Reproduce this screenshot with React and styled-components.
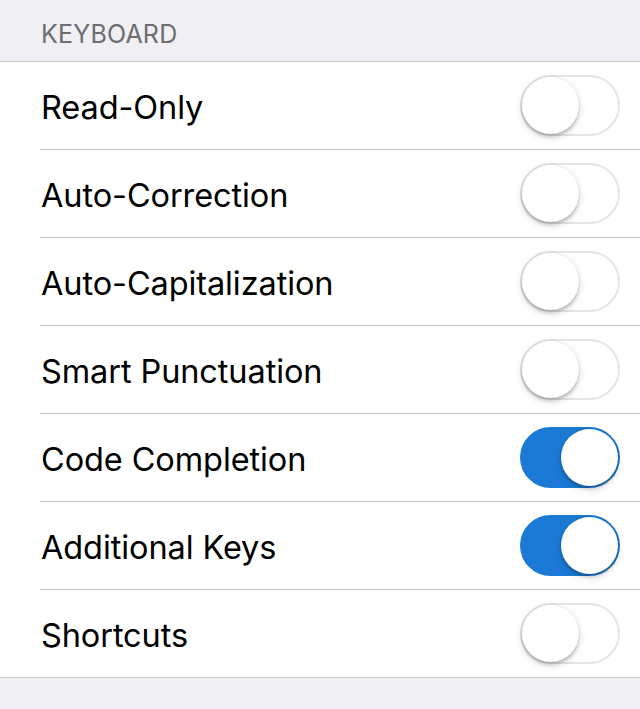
import React, { useState } from 'react'
import styled, { createGlobalStyle } from 'styled-components'

const GlobalStyle = createGlobalStyle`
  html, body {
    margin: 0;
    padding: 0;
    background: #efeff4;
    font-family: Inter, "Noto Sans", sans-serif;
    -webkit-font-smoothing: antialiased;
  }
`

const initial = [
  { label: 'Read-Only', on: false },
  { label: 'Auto-Correction', on: false },
  { label: 'Auto-Capitalization', on: false },
  { label: 'Smart Punctuation', on: false },
  { label: 'Code Completion', on: true },
  { label: 'Additional Keys', on: true },
  { label: 'Shortcuts', on: false },
]

const App = () => {
  const [items, setItems] = useState(initial)

  const toggle = (i) => {
    setItems(items.map((it, j) => (j === i ? { ...it, on: !it.on } : it)))
  }

  return (
    <Page>
      <GlobalStyle />
      <SectionHeader>KEYBOARD</SectionHeader>
      <Group>
        {items.map((it, i) => (
          <Row key={it.label} last={i === items.length - 1}>
            <Label>{it.label}</Label>
            <Switch on={it.on} onClick={() => toggle(i)}>
              <Knob on={it.on} />
            </Switch>
          </Row>
        ))}
      </Group>
    </Page>
  )
}

export default App

const Page = styled.div`
  min-height: 709px;
  background: #efeff4;
`

const SectionHeader = styled.div`
  height: 61px;
  box-sizing: border-box;
  padding: 19px 0 0 41px;
  font-size: 25px;
  line-height: 30px;
  color: #6d6d72;
  letter-spacing: 0.2px;
`

const Group = styled.div`
  background: #fff;
  border-top: 1px solid #c8c7cc;
  padding-left: 40px;
`

const Row = styled.div`
  height: 88px;
  box-sizing: border-box;
  display: flex;
  align-items: center;
  justify-content: space-between;
  padding-right: 20px;
  border-bottom: 1px solid #c8c7cc;
  margin-left: ${(p) => (p.last ? '-40px' : '0')};
  padding-left: ${(p) => (p.last ? '40px' : '0')};
`

const Label = styled.span`
  font-size: 32.5px;
  color: #000;
  padding: 3px 0 0 1px;
  letter-spacing: -0.1px;
`

const Switch = styled.div`
  position: relative;
  width: 100px;
  height: 61px;
  box-sizing: border-box;
  border-radius: 31px;
  cursor: pointer;
  background: ${(p) => (p.on ? '#1a7ad6' : '#fff')};
  border: ${(p) => (p.on ? 'none' : '2px solid #e5e5ea')};
  transition: background 0.2s;
`

const Knob = styled.div`
  position: absolute;
  top: ${(p) => (p.on ? '2px' : '0')};
  left: ${(p) => (p.on ? '41px' : '0')};
  width: 57px;
  height: 57px;
  border-radius: 50%;
  background: #fff;
  box-shadow: 0 3px 3px rgba(0, 0, 0, 0.15), 0 3px 8px rgba(0, 0, 0, 0.15),
    0 0 0 1px rgba(0, 0, 0, 0.04);
  transition: left 0.2s;
`
